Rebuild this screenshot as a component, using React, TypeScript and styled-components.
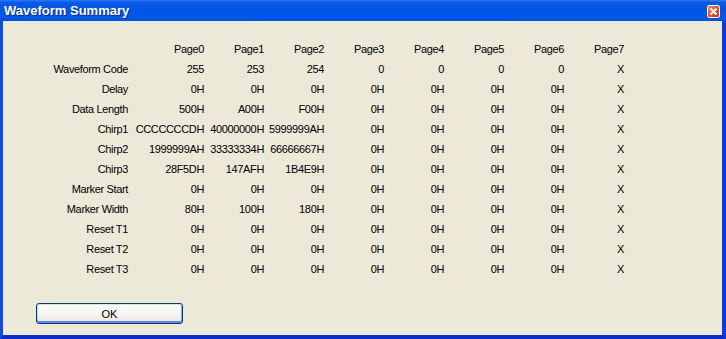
import { Fragment } from "react";
import styled, { createGlobalStyle } from "styled-components";

const GlobalStyle = createGlobalStyle`
  html, body {
    margin: 0;
    padding: 0;
    background: #ece9d8;
  }
`;

const pages = ["Page0", "Page1", "Page2", "Page3", "Page4", "Page5", "Page6", "Page7"];

const rows: [string, string[]][] = [
  ["Waveform Code", ["255", "253", "254", "0", "0", "0", "0", "X"]],
  ["Delay", ["0H", "0H", "0H", "0H", "0H", "0H", "0H", "X"]],
  ["Data Length", ["500H", "A00H", "F00H", "0H", "0H", "0H", "0H", "X"]],
  ["Chirp1", ["CCCCCCCDH", "40000000H", "5999999AH", "0H", "0H", "0H", "0H", "X"]],
  ["Chirp2", ["1999999AH", "33333334H", "66666667H", "0H", "0H", "0H", "0H", "X"]],
  ["Chirp3", ["28F5DH", "147AFH", "1B4E9H", "0H", "0H", "0H", "0H", "X"]],
  ["Marker Start", ["0H", "0H", "0H", "0H", "0H", "0H", "0H", "X"]],
  ["Marker Width", ["80H", "100H", "180H", "0H", "0H", "0H", "0H", "X"]],
  ["Reset T1", ["0H", "0H", "0H", "0H", "0H", "0H", "0H", "X"]],
  ["Reset T2", ["0H", "0H", "0H", "0H", "0H", "0H", "0H", "X"]],
  ["Reset T3", ["0H", "0H", "0H", "0H", "0H", "0H", "0H", "X"]],
];

const Window = styled.div`
  width: 726px;
  height: 339px;
  display: flex;
  flex-direction: column;
  font-family: "Liberation Sans", Arial, sans-serif;
  font-size: 11px;
  color: #000;
  box-sizing: border-box;
`;

const TitleBar = styled.div`
  height: 21px;
  flex: none;
  display: flex;
  align-items: center;
  justify-content: space-between;
  padding: 0 6px 0 4px;
  background: linear-gradient(
    #2a7cf6 0%,
    #0a5ae8 12%,
    #0054e3 45%,
    #0058ee 80%,
    #0050d8 100%
  );
`;

const Title = styled.span`
  font-family: "Liberation Sans", Arial, sans-serif;
  font-weight: bold;
  font-size: 13px;
  color: #fff;
  text-shadow: 1px 1px 0 #0a2a8a;
`;

const CloseButton = styled.div`
  width: 11px;
  height: 11px;
  margin-top: 1px;
  border: 1px solid #fff;
  border-radius: 2px;
  background: linear-gradient(135deg, #f08a6a 0%, #e05530 45%, #c8401c 100%);
  display: flex;
  align-items: center;
  justify-content: center;
`;

const Body = styled.div`
  flex: 1;
  display: flex;
  flex-direction: column;
  background: #ece9d8;
  border-left: 3px solid #0a4ee0;
  border-right: 4px solid #0a3ad8;
  border-bottom: 4px solid #0a2ccc;
  padding-top: 18px;
`;

const Table = styled.div`
  display: grid;
  grid-template-columns: 141px repeat(8, 60px);
  grid-auto-rows: 20px;
  letter-spacing: -0.35px;
`;

const Cell = styled.div<{ $label?: boolean }>`
  display: flex;
  align-items: center;
  justify-content: flex-end;
  padding-right: ${({ $label }) => ($label ? "16px" : "0")};
  white-space: nowrap;
`;

const Footer = styled.div`
  display: flex;
  padding: 24px 0 0 33px;
`;

const OkButton = styled.button`
  width: 147px;
  height: 21px;
  border: 1px solid #003c74;
  border-radius: 3px;
  background: linear-gradient(#ffffff 0%, #f4f3ee 60%, #e8e7e0 100%);
  box-shadow: inset 0 1px 0 #cee7ff, inset 0 -2px 0 #6982ee, inset 1px 0 0 #bcd4f6,
    inset -1px 0 0 #89ade4;
  font-family: "Liberation Sans", Arial, sans-serif;
  font-size: 11px;
  color: #000;
  padding: 0;
`;

export default function App() {
  return (
    <>
      <GlobalStyle />
      <Window>
        <TitleBar>
          <Title>Waveform Summary</Title>
          <CloseButton>
            <svg width="9" height="9" viewBox="0 0 9 9">
              <path d="M1.5 1.5 L7.5 7.5 M7.5 1.5 L1.5 7.5" stroke="#fff" strokeWidth="2" />
            </svg>
          </CloseButton>
        </TitleBar>
        <Body>
          <Table>
            <Cell $label />
            {pages.map((p) => (
              <Cell key={p}>{p}</Cell>
            ))}
            {rows.map(([label, values]) => (
              <Fragment key={label}>
                <Cell $label>{label}</Cell>
                {values.map((v, i) => (
                  <Cell key={i}>{v}</Cell>
                ))}
              </Fragment>
            ))}
          </Table>
          <Footer>
            <OkButton>OK</OkButton>
          </Footer>
        </Body>
      </Window>
    </>
  );
}
